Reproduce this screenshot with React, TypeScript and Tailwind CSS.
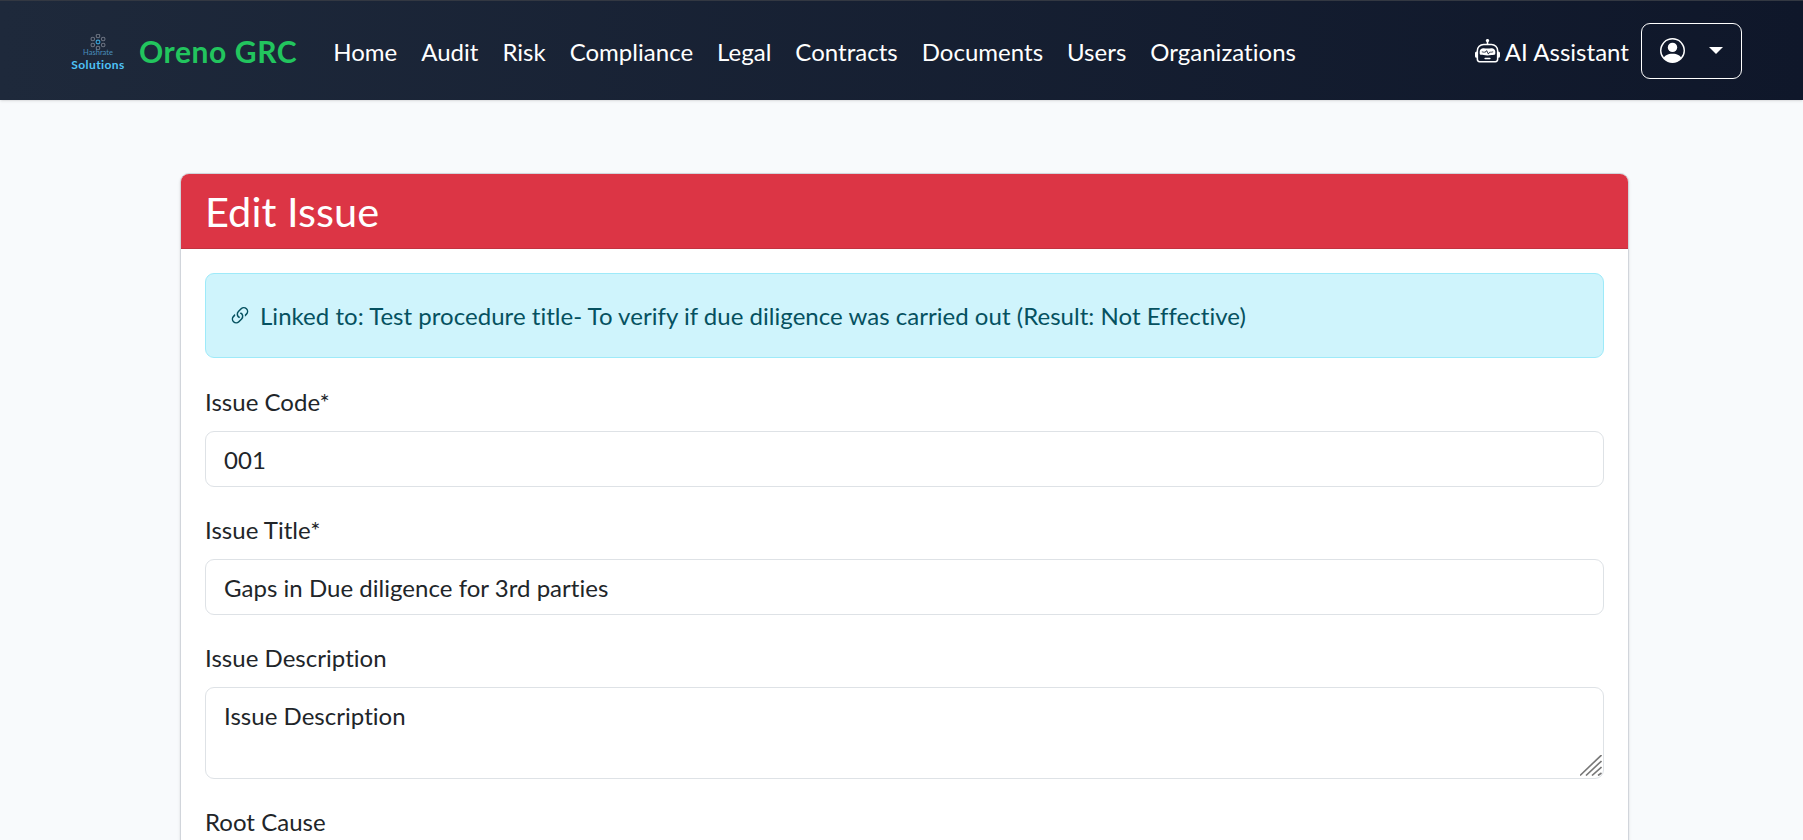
import { BsLink45Deg, BsRobot, BsPersonCircle } from "react-icons/bs";

const nav = ["Home", "Audit", "Risk", "Compliance", "Legal", "Contracts", "Documents", "Users", "Organizations"];

function Logo() {
  const nodes = [[28, 2], [33.2, 5], [33.2, 11], [28, 14], [22.8, 11], [22.8, 5]];
  return (
    <svg className="mr-[13px] mt-[2px]" width="56" height="36" viewBox="0 0 56 36" fill="none">
      {nodes.map(([x, y], i) => (
        <circle key={i} cx={x} cy={y} r="1.8" stroke="#6b7280" strokeWidth="1.1" />
      ))}
      <circle cx="28" cy="8" r="1.9" stroke="#38a3d8" strokeWidth="1.1" />
      <text x="28" y="21" textAnchor="middle" fontSize="7.5" fill="#4a8fbd">Hashrate</text>
      <text x="28" y="34.5" textAnchor="middle" fontSize="12" fontWeight="700" letterSpacing="0.4" fill="#4fc3f7">Solutions</text>
    </svg>
  );
}

function Field({ label, value }: { label: string; value: string }) {
  return (
    <div className="mb-[26px]">
      <label className="block mb-[12px] text-[#212529] text-[24px] leading-[34px]">{label}</label>
      <input
        readOnly
        value={value}
        className="block w-full h-[56px] px-[18px] pt-[1px] bg-white border border-[#dee2e6] rounded-[9px] text-[24px] text-[#212529] outline-none"
      />
    </div>
  );
}

export default function App() {
  return (
    <div className="h-[840px] overflow-hidden bg-[#f8fafc] font-['Lato','Noto_Sans',sans-serif] [font-variant-ligatures:none] tracking-[0.03px]">
      <nav className="h-[100px] flex items-center pl-[70px] pr-[61px] border-t border-[#333842] bg-gradient-to-r from-[#1e293b] to-[#0f172a] shadow-sm">
        <Logo />
        <span className="text-[#22c55e] text-[30px] font-bold mr-[36px] mt-[1px] tracking-[0.6px]">Oreno GRC</span>
        <div className="flex gap-[23.9px] text-white text-[24px] mt-[3px]">
          {nav.map((n) => (
            <span key={n}>{n}</span>
          ))}
        </div>
        <div className="ml-auto flex items-center text-white text-[24px]">
          <BsRobot className="w-[25px] h-[25px] mr-[5px] mt-[2px]" />
          <span className="mr-3 mt-[2px]">AI Assistant</span>
          <div className="w-[101px] h-[56px] border border-white rounded-[9px] flex items-center justify-center gap-[24px]">
            <BsPersonCircle className="w-[25px] h-[25px]" />
            <span className="border-t-[7px] border-x-[7px] border-x-transparent border-t-white" />
          </div>
        </div>
      </nav>
      <main className="w-[1449px] ml-[180px] mt-[72.5px] bg-white rounded-[9px] border border-[#d1d5db] shadow-sm">
        <div className="h-[75px] bg-[#dc3545] text-white text-[41.5px] pl-6 pt-[1px] flex items-center rounded-t-[8px] border-b border-[#c23340]">Edit Issue</div>
        <div className="p-6">
          <div className="h-[85px] mb-[27px] flex items-center gap-[8px] pl-[22px] pr-6 pt-[2px] bg-[#cff4fc] border border-[#9eeaf9] rounded-[9px] text-[#055160] text-[24px]">
            <BsLink45Deg className="w-[24px] h-[24px] -mt-[1px]" />
            <span>Linked to: Test procedure title- To verify if due diligence was carried out (Result: Not Effective)</span>
          </div>
          <Field label="Issue Code*" value="001" />
          <Field label="Issue Title*" value="Gaps in Due diligence for 3rd parties" />
          <label className="block mb-[12px] text-[#212529] text-[24px] leading-[34px]">Issue Description</label>
          <div className="relative">
            <textarea
              readOnly
              defaultValue="Issue Description"
              className="block w-full h-[92px] px-[18px] py-[10px] bg-white border border-[#dee2e6] rounded-[9px] text-[24px] text-[#212529] outline-none resize-none"
            />
            <svg className="absolute right-[2px] bottom-[3px]" width="22" height="21" viewBox="0 0 22 21" stroke="#777" strokeWidth="1.6">
              <line x1="0" y1="20.5" x2="21.5" y2="0" />
              <line x1="6" y1="20.5" x2="21.5" y2="6" />
              <line x1="12" y1="20.5" x2="21.5" y2="12" />
              <line x1="18" y1="20.5" x2="21.5" y2="18" />
            </svg>
          </div>
          <label className="block mt-[26px] text-[#212529] text-[24px] leading-[34px]">Root Cause</label>
        </div>
      </main>
    </div>
  );
}
